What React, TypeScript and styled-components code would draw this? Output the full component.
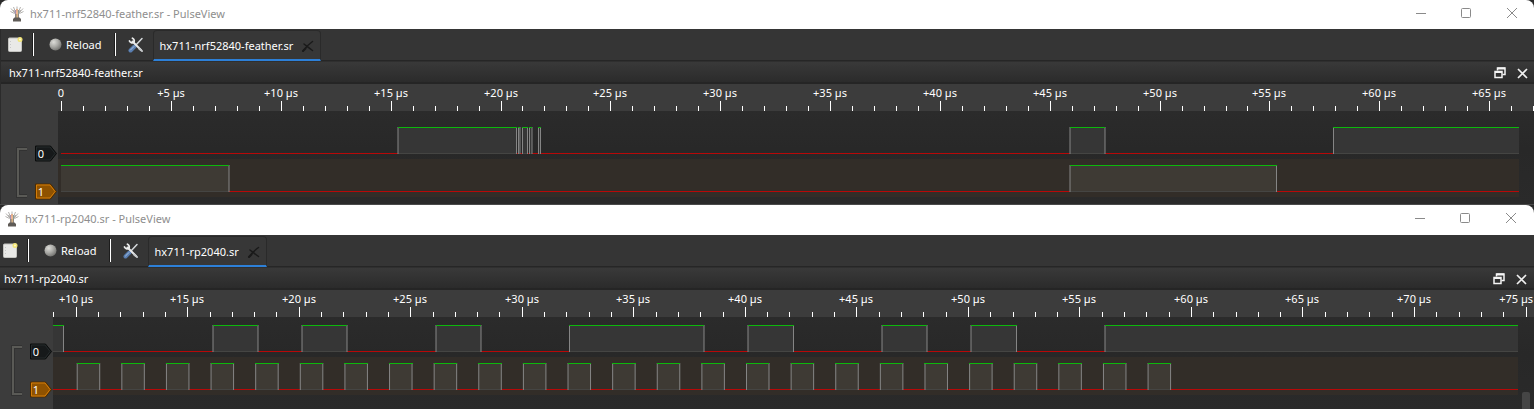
import React from "react";
import styled, { createGlobalStyle } from "styled-components";

const Global = createGlobalStyle`
  * { box-sizing: border-box; }
  body { margin: 0; background: #2a2a2a; color: #fff; font: 11px/16px "Noto Sans", "Open Sans", sans-serif; }
  button { font: inherit; color: inherit; background: none; border: 0; padding: 0; margin: 0; display: flex; align-items: center; }
  svg { display: block; flex: none; }
`;

const Window = styled.section<{ $framed?: boolean }>`
  display: flex;
  flex-direction: column;
  border-bottom: ${(p) => (p.$framed ? "1px solid #4a4a4a" : "0")};
`;

const TitleBar = styled.header<{ $inset: number; $height: number; $right: number }>`
  display: flex;
  align-items: center;
  height: ${(p) => p.$height}px;
  padding: 0 ${(p) => p.$right}px 2px ${(p) => p.$inset}px;
  background: #fff;
  border-radius: 8px 8px 0 0;
`;

const Title = styled.h1`
  flex: 1;
  margin: 0 0 0 6px;
  color: #8e8e8e;
  font: inherit;
`;

const Caption = styled.div`
  display: flex;
  gap: 34px;
`;

const Body = styled.div<{ $edge: boolean }>`
  border-left: ${(p) => (p.$edge ? "1px solid #2b2b2b" : "0")};
`;

const Toolbar = styled.div<{ $inset: number }>`
  display: flex;
  align-items: center;
  height: 32px;
  padding-left: ${(p) => p.$inset}px;
  background: #353535;
  border-bottom: 1px solid #262626;
`;

const Separator = styled.span`
  width: 2px;
  height: 23px;
  background: #fff;
  border-left: 1px solid #1c1c1c;
`;

const ToolButton = styled.button<{ $before?: number; $after?: number }>`
  gap: 4px;
  && {
    margin: 0 ${(p) => p.$after ?? 0}px 0 ${(p) => p.$before ?? 0}px;
  }
`;

const Tab = styled.div`
  align-self: flex-end;
  display: flex;
  align-items: center;
  gap: 8px;
  height: 31px;
  margin-bottom: -1px;
  padding: 2px 6px 0 5px;
  background: #373737;
  border: 1px solid #2a2a2a;
  border-bottom: 2px solid #2d80d8;
  border-radius: 4px 4px 0 0;
`;

const Label = styled.span`
  white-space: nowrap;
`;

const Dock = styled.div<{ $inset: number; $right: number }>`
  display: flex;
  align-items: center;
  gap: 11px;
  height: 23px;
  padding: 2px ${(p) => p.$right}px 0 ${(p) => p.$inset}px;
  background: linear-gradient(#393939, #2b2b2b);
  border-top: 1px solid #2f2f2f;
  border-bottom: 2px solid #252525;
`;

const DockTitle = styled.h2`
  flex: 1;
  margin: 0;
  font: inherit;
`;

const RulerStrip = styled.div`
  display: flex;
  background: #3c3c3c;
`;

const View = styled.div`
  display: flex;
`;

const Gutter = styled.div`
  background: #3c3c3c;
`;

const Plot = styled.div`
  flex: 1;
  min-width: 0;
  display: flex;
  position: relative;
  overflow: hidden;
  background: linear-gradient(#2b2b2b, #282828 40%, #2a2a2a);
`;

const ScrollThumb = styled.div`
  position: absolute;
  right: 4px;
  bottom: 0;
  width: 8px;
  height: 17px;
  border-radius: 2px 2px 0 0;
  background: #454545;
`;

const AppIcon = () => (
  <svg width="14" height="16" viewBox="0 0 14 16" fill="none">
    <path d="M1 2.500l3.500 4M3.500 1l2 5M7 0.500v5M10.500 1l-2 5M13 2.500L9.500 6.500M0.500 5.500l4 2M13.500 5.500l-4 2" stroke="#b3b1ae" />
    <path d="M3.500 4l2 4M10.500 4l-2 4" stroke="#a39f9c" />
    <path d="M5.500 4v5" stroke="#a48fb4" />
    <path d="M7 3v6" stroke="#e8a070" strokeWidth="1.500" />
    <path d="M8.500 4v5" stroke="#8a9c94" />
    <path d="M5 8h4v4H5z" fill="#8f8780" />
    <path d="M6.500 8h1.500v4h-1.500z" fill="#d8b284" />
    <path d="M4.500 11.500h5l1.500 1.500v2.500h-8v-2.500z" fill="#5f5b57" />
  </svg>
);

const MinimizeIcon = () => (
  <svg width="12" height="12" viewBox="0 0 12 12"><path d="M2 5.500h10" stroke="#8a8a8a" /></svg>
);
const MaximizeIcon = () => (
  <svg width="12" height="12" viewBox="0 0 12 12"><rect x="1.500" y="0.500" width="9" height="9" rx="1" fill="none" stroke="#8a8a8a" /></svg>
);
const CloseIcon = () => (
  <svg width="12" height="12" viewBox="0 0 12 12"><path d="M1 0l10 10M11 0L1 10" stroke="#8a8a8a" /></svg>
);

const NewIcon = () => (
  <svg width="15" height="15" viewBox="0 0 15 15">
    <rect x="0.500" y="1" width="13" height="13.500" rx="1" fill="#e9e9e7" stroke="#c4c4c0" />
    <path d="M2.500 4v8" stroke="#c8c8c8" strokeDasharray="1 2" />
    <circle cx="12" cy="2.500" r="2.500" fill="#f1e476" />
    <circle cx="12" cy="2.500" r="1" fill="#fffbd0" />
  </svg>
);

const BallIcon = () => (
  <svg width="13" height="13" viewBox="0 0 13 13">
    <defs>
      <radialGradient id="ball" cx="0.35" cy="0.3" r="0.75">
        <stop offset="0" stopColor="#dcdcd8" />
        <stop offset="0.5" stopColor="#acaca8" />
        <stop offset="1" stopColor="#71716e" />
      </radialGradient>
    </defs>
    <circle cx="6.500" cy="6.500" r="6" fill="url(#ball)" />
  </svg>
);

const ToolsIcon = () => (
  <svg width="16" height="16" viewBox="0 0 16 16" fill="none" strokeLinecap="round">
    <path d="M14 1.500L7.500 8.500" stroke="#d5d9dc" strokeWidth="1.500" />
    <path d="M6.500 9.500L2.500 13.500" stroke="#587db0" strokeWidth="4" />
    <path d="M6 9.500L2.500 13" stroke="#a9c2df" />
    <path d="M4.500 4.500l8.500 8.500" stroke="#e9eaea" strokeWidth="2" />
    <path d="M1.500 4a3 3 0 0 0 4.200 1.500A3 3 0 0 0 4.500 1.200" stroke="#eceded" strokeWidth="1.800" />
    <path d="M11 11.500l3 2.500" stroke="#c5c8ca" strokeWidth="2" />
  </svg>
);

const TabCloseIcon = () => (
  <svg width="13" height="13" viewBox="0 0 13 13" fill="none" strokeLinecap="round">
    <path d="M11.500 1.500C8 4 4.500 7.500 2 11" stroke="#1a1a1a" strokeWidth="1.500" />
    <path d="M3 4C5 5.500 8.500 8.500 11.500 10.500" stroke="#1a1a1a" strokeWidth="1.500" />
    <path d="M4.500 8.500L2 11" stroke="#1a1a1a" strokeWidth="2" />
  </svg>
);

const FloatIcon = () => (
  <svg width="12" height="12" viewBox="0 0 12 12" fill="none">
    <path d="M3.500 3.500v-2.500h7.500v6.500h-2.500" stroke="#f4f4f4" strokeWidth="1.500" />
    <rect x="1" y="4.500" width="7" height="6" stroke="#f4f4f4" strokeWidth="1.500" />
    <path d="M1 5h7M3.500 1.500H11" stroke="#f4f4f4" strokeWidth="2" />
  </svg>
);

const DockCloseIcon = () => (
  <svg width="11" height="11" viewBox="0 0 11 11"><path d="M1 1l9 9M10 1l-9 9" stroke="#f0f0f0" strokeWidth="1.700" /></svg>
);

type Pulse = [number, number];

interface Capture {
  file: string;
  shift: number;
  titleHeight: number;
  framed: boolean;
  /* ruler: position of the first labelled tick, its time and the pixels per microsecond */
  origin: number;
  firstTime: number;
  scale: number;
  rulerHeight: number;
  /* distance from the top of the plot to the first channel's high level */
  top: number;
  plotHeight: number;
  plotStart: number;
  plotEnd: number;
  channels: [Pulse[], Pulse[]];
  scrollbar: boolean;
}

function Ruler({ c }: { c: Capture }) {
  const h = c.rulerHeight;
  const left = c.framed ? 1 : 0;
  const ticks: React.ReactNode[] = [];
  for (let i = c.framed ? 0 : -1; i <= 68; i++) {
    const x = Math.floor(c.origin + i * c.scale) - left;
    if (x > 1540) break;
    const time = c.firstTime + i;
    const major = time % 5 === 0;
    ticks.push(<rect key={i} x={x} y={major ? h - 10 : h - 5} width="1" height={major ? 10 : 5} fill="#fff" />);
    if (major) {
      const last = time === 75;
      ticks.push(
        <text key={"t" + i} x={last ? x + 7 : x} y={h - 14} textAnchor={last ? "end" : "middle"} fill="#fff">
          {time === 0 ? "0" : `+${time} µs`}
        </text>
      );
    }
  }
  return <svg width="100%" height={h}>{ticks}</svg>;
}

function ChannelGutter({ c }: { c: Capture }) {
  const low0 = c.top + 26;
  const low1 = low0 + 38;
  const x0 = c.framed ? 1 : c.shift;
  const w = c.plotStart - (c.framed ? 1 : 0);
  const tag = (y: number, name: string, fill: string, edge: string, rim: string) => (
    <g>
      <path d={`M35.500 ${y - 7}h15l6 7.500l-6 7.500h-15z`} fill={fill} stroke={rim} />
      <path d={`M36.500 ${y - 6}h13.500l5 6.500l-5 6.500h-13.500z`} fill="none" stroke={edge} />
      <text x="41" y={y + 5} textAnchor="middle" fill="#fff">{name}</text>
    </g>
  );
  return (
    <svg width={w} height={c.plotHeight} viewBox={`${x0} 0 ${w} ${c.plotHeight}`}>
      <path d={`M27 ${low0 - 4}h-9v${47}h9`} fill="none" stroke="#323232" strokeWidth="4" />
      <path d={`M27 ${low0 - 4}h-9v${47}h9`} fill="none" stroke="#5a5a56" strokeWidth="2" />
      {tag(low0, "0", "#16191a", "#242a2b", "#0a0c0c")}
      {tag(low1, "1", "#8f5200", "#d47c08", "#4a2b02")}
    </svg>
  );
}

function Trace({ pulses, high, from, to, fill }: { pulses: Pulse[]; high: number; from: number; to: number; fill: string }) {
  const low = high + 26;
  return (
    <g>
      <rect x={from} y={low} width={to - from} height="1" fill="#b80808" />
      {pulses.map(([a, b], i) => (
        <g key={i}>
          <rect x={a} y={high} width={b - a} height="27" fill={fill} />
          <rect x={a} y={low} width={b - a} height="1" fill="#454543" />
          {a > from && <rect x={a - 0.5} y={high} width="1" height="27" fill="#858585" />}
          {b < to && <rect x={b - 0.5} y={high} width="1" height="27" fill="#858585" />}
          <rect x={Math.floor(a)} y={high} width={Math.ceil(b) - Math.floor(a)} height="1" fill="#0cb80c" />
        </g>
      ))}
    </g>
  );
}

function Waves({ c }: { c: Capture }) {
  const s = c.plotStart;
  const end = c.plotEnd - s;
  const from = c.framed ? 3 : 0;
  const local = (list: Pulse[]) => list.map(([a, b]): Pulse => [a - s, b - s]);
  return (
    <svg width="100%" height={c.plotHeight}>
      <rect x="0" y={c.top + 32} width={end} height="38" fill="#322d28" />
      <Trace pulses={local(c.channels[0])} high={c.top} from={from} to={end} fill="#363636" />
      <Trace pulses={local(c.channels[1])} high={c.top + 38} from={from} to={end} fill="#3e3a34" />
    </svg>
  );
}

function PulseWindow({ c }: { c: Capture }) {
  const edge = c.framed ? 1 : 0;
  const pad = (n: number) => n - c.shift - edge;
  return (
    <Window $framed={c.framed}>
      <TitleBar $inset={10 - c.shift} $height={c.titleHeight} $right={c.framed ? 16 : 17}>
        <AppIcon />
        <Title>{c.file} - PulseView</Title>
        <Caption>
          <button aria-label="Minimize"><MinimizeIcon /></button>
          <button aria-label="Maximize"><MaximizeIcon /></button>
          <button aria-label="Close"><CloseIcon /></button>
        </Caption>
      </TitleBar>
      <Body $edge={c.framed}>
        <Toolbar $inset={pad(8)}>
          <ToolButton aria-label="New session" $after={9}><NewIcon /></ToolButton>
          <Separator />
          <ToolButton $before={15} $after={13}><BallIcon /><Label>Reload</Label></ToolButton>
          <Separator />
          <ToolButton aria-label="Settings" $before={12} $after={9}><ToolsIcon /></ToolButton>
          <Tab>
            <button><Label>{c.file}</Label></button>
            <button aria-label="Close tab"><TabCloseIcon /></button>
          </Tab>
        </Toolbar>
        <Dock $inset={pad(9)} $right={c.framed ? 6 : 7}>
          <DockTitle>{c.file}</DockTitle>
          <button aria-label="Float"><FloatIcon /></button>
          <button aria-label="Close view"><DockCloseIcon /></button>
        </Dock>
        <RulerStrip><Ruler c={c} /></RulerStrip>
        <View>
          <Gutter><ChannelGutter c={c} /></Gutter>
          <Plot>
            <Waves c={c} />
            {c.scrollbar && <ScrollThumb />}
          </Plot>
        </View>
      </Body>
    </Window>
  );
}

const clock = Array.from({ length: 25 }, (_, n): Pulse => [77.2 + n * 44.62, 99.7 + n * 44.62]);

const captures: Capture[] = [
  {
    file: "hx711-nrf52840-feather.sr",
    shift: 0,
    titleHeight: 29,
    framed: true,
    origin: 61.6,
    firstTime: 0,
    scale: 21.97,
    rulerHeight: 27,
    top: 16,
    plotHeight: 93,
    plotStart: 58,
    plotEnd: 1519,
    channels: [
      [[398, 516.5], [518.5, 520], [522.5, 527.5], [529.5, 532], [538.5, 540.5], [1070, 1105], [1333.5, 1519]],
      [[61, 229], [1070, 1276.5]],
    ],
    scrollbar: false,
  },
  {
    file: "hx711-rp2040.sr",
    shift: 5,
    titleHeight: 30,
    framed: false,
    origin: 76.2,
    firstTime: 10,
    scale: 22.305,
    rulerHeight: 27,
    top: 8,
    plotHeight: 92,
    plotStart: 53,
    plotEnd: 1518,
    channels: [
      [[53, 63.5], [213, 258], [302, 347], [436, 481], [569.5, 704], [748, 793.5], [882, 927], [971, 1016.5], [1105, 1518]],
      clock,
    ],
    scrollbar: true,
  },
];

export default function App() {
  return (
    <main>
      <Global />
      {captures.map((c) => <PulseWindow key={c.file} c={c} />)}
    </main>
  );
}
